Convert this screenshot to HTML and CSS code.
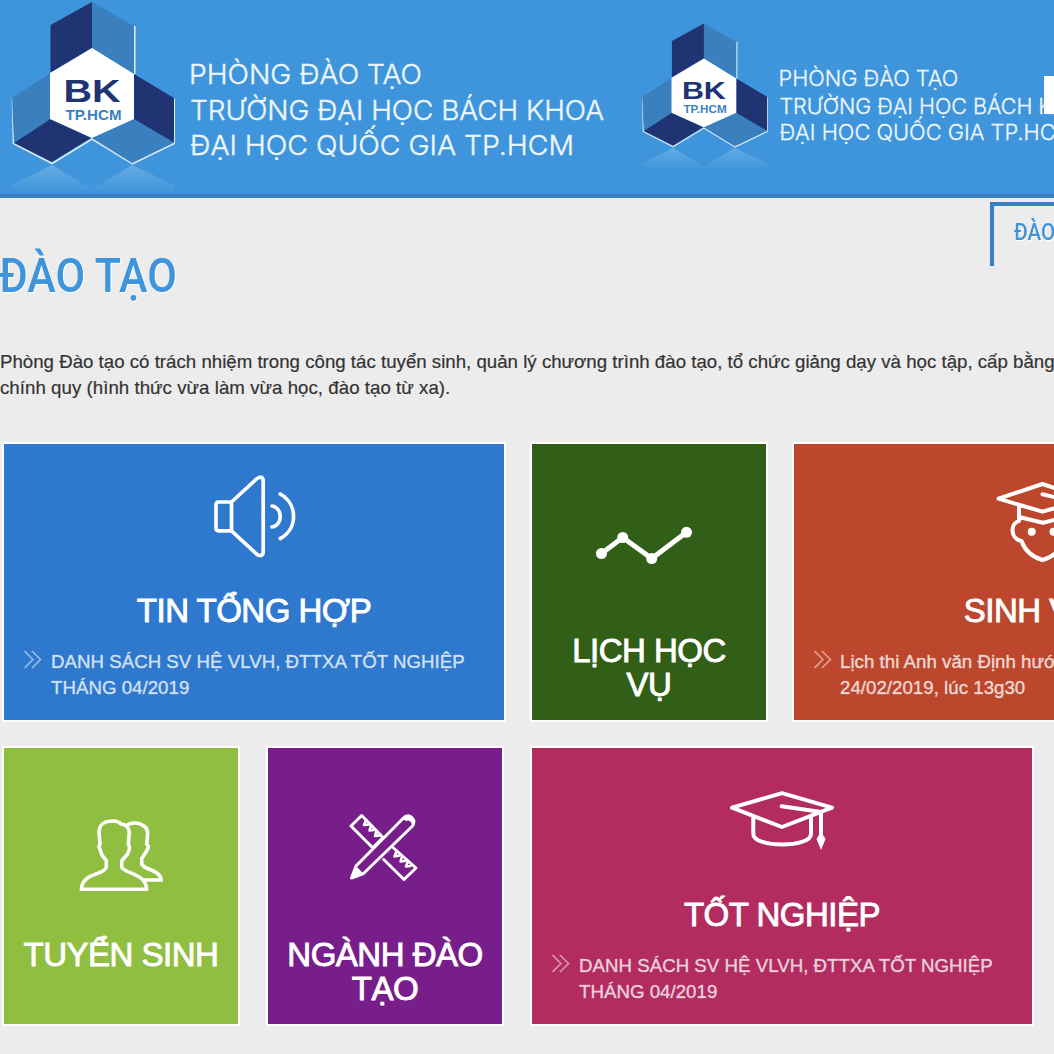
FILE: index.html
```html
<!DOCTYPE html>
<html lang="vi">
<head>
<meta charset="utf-8">
<title>Phòng Đào tạo</title>
<link rel="stylesheet" href="styles.css">
</head>
<body>
<svg class="defs" width="0" height="0" aria-hidden="true">
  <defs>
    <linearGradient id="fade" x1="0" y1="0" x2="0" y2="1"><stop offset="0" stop-color="#fff" stop-opacity=".2"/><stop offset="1" stop-color="#fff" stop-opacity="0.02"/></linearGradient>
    <symbol id="brand" viewBox="0 0 610 194" preserveAspectRatio="none">
      <g stroke-linejoin="round">
        <path d="M12.500 98.500 13.500 143.500 52 163.500 92 139 132.500 163.700 174.200 143.500V98.500M134.700 26V74" fill="none" stroke="#d9eaf8" stroke-width="1.700"/>
        <path d="M12 98 50.500 73V119L14 143ZM92 2 134 26V74L92 48ZM134 119 174 142.500 132 163 92 138Z" fill="#3a80bf"/>
        <path d="M92 2 50.500 25V73L92 48ZM134 74 174 98V142.500L134 119ZM50.500 119 91 138 52 162 14 143Z" fill="#203372"/>
        <path d="M92 48 134 74V119L92 138 50 119V73Z" fill="#fff"/>
      </g>
      <path d="M12 185 52 165 92 189 132 165 174 185V191H12Z" fill="url(#fade)"/>
      <g font-family="'Liberation Sans', sans-serif" font-weight="700">
        <text x="63.500" y="101.500" font-size="31" fill="#203372" textLength="57" lengthAdjust="spacingAndGlyphs">BK</text>
        <text x="65.500" y="119.500" font-size="15" fill="#3a80bf" textLength="56" lengthAdjust="spacingAndGlyphs">TP.HCM</text>
      </g>
      <g font-family="Inter, sans-serif" font-weight="300" font-size="27.500" fill="#eef6fd" stroke="#eef6fd" stroke-width=".4">
        <text x="189" y="84" textLength="233" lengthAdjust="spacingAndGlyphs">PHÒNG ĐÀO TẠO</text>
        <text x="190" y="120" textLength="414" lengthAdjust="spacingAndGlyphs">TRƯỜNG ĐẠI HỌC BÁCH KHOA</text>
        <text x="190" y="155" textLength="384" lengthAdjust="spacingAndGlyphs">ĐẠI HỌC QUỐC GIA TP.HCM</text>
      </g>
    </symbol>
    <symbol id="chevrons" viewBox="0 0 18 19"><path d="M.500 1 9 9.500.500 18M8 1 16.500 9.500 8 18" fill="none" stroke="#fff" stroke-opacity=".5" stroke-width="1.600"/></symbol>
  </defs>
</svg>

<header class="header">
  <svg class="brand"><use href="#brand"/></svg>
  <svg class="brand brand-small"><use href="#brand"/></svg>
  <div class="search"></div>
</header>

<main>
  <div class="top">
    <h1 class="page-title"><svg width="184" height="70"><text x="-1" y="54" textLength="178" lengthAdjust="spacingAndGlyphs">ĐÀO TẠO</text></svg></h1>
    <nav class="tab"><span>ĐÀO TẠO</span></nav>
  </div>
  <p class="intro"><span class="l1">Phòng Đào tạo có trách nhiệm trong công tác tuyển sinh, quản lý chương trình đào tạo, tổ chức giảng dạy và học tập, cấp bằng</span><br><span class="l2">chính quy (hình thức vừa làm vừa học, đào tạo từ xa).</span></p>

  <div class="row row-first">
    <section class="tile wide blue">
      <svg class="icon" viewBox="0 0 120 120"><path stroke-width="3.700" d="M37.500 46H24.800q-2.800 0-2.800 2.800V72q0 2.800 2.800 2.800H37.500ZM37.500 46 63 22.500Q69.200 19 69.200 25V95.500Q69.200 101.500 63 98.500L37.500 74.800M78 50C89 52 89 69 78 71M86.300 38C104 48 104 73 86.300 82.500"/></svg>
      <h2>TIN TỔNG HỢP</h2>
      <div class="news"><svg><use href="#chevrons"/></svg><p>DANH SÁCH SV HỆ VLVH, ĐTTXA TỐT NGHIỆP<br>THÁNG 04/2019</p></div>
    </section>
    <section class="tile small green">
      <svg class="icon" viewBox="0 0 120 120"><path stroke-width="5" d="M12.500 71.500 33.700 55.500 62.700 76.500 97.500 50.300"/><g class="solid"><circle cx="12.500" cy="71.500" r="5.500"/><circle cx="33.700" cy="55.500" r="5.500"/><circle cx="62.700" cy="76.500" r="5.500"/><circle cx="97.500" cy="50.300" r="5.500"/></g></svg>
      <h2>LỊCH HỌC<br>VỤ</h2>
    </section>
    <section class="tile wide orange">
      <svg class="icon" viewBox="0 0 120 120"><path d="M14.500 42.700 58.500 28 102.500 42.700 58.500 55.700ZM58.500 38.300 92 46V66M35 49.500V65C26 67 26 83 37.500 85C41 95 48 101 58.700 104C69 101 76 95 79.500 85C91 83 91 67 82 65V49.500M35 61 59 66.700 82 61"/><g class="solid"><circle cx="47.700" cy="75.700" r="4"/><circle cx="69.500" cy="75.700" r="4"/></g></svg>
      <h2>SINH VIÊN</h2>
      <div class="news"><svg><use href="#chevrons"/></svg><p class="student">Lịch thi Anh văn Định hướng<br>24/02/2019, lúc 13g30</p></div>
    </section>
  </div>

  <div class="row">
    <section class="tile small lime">
      <svg class="icon" viewBox="0 0 120 120"><path stroke-width="3.600" stroke-linecap="butt" stroke-linejoin="miter" d="M65 40C69 36 78 36 82 39.500Q87.500 42 86.500 50L85.700 58Q89 60 85 66L80.700 72.500V78C83 84 100 84 100 94H81M20.500 103.300C20.500 92 32 89 40 86Q45.500 83 45.300 81V74.500L41 69 38 60.500 39 58 38 47C38 38 43 35 52.500 35Q57 35 60 38Q67 38.500 68.300 46L67.300 58Q70 61 66.500 68L60.700 75V81C63 88 85.500 87 85.500 103.300Z"/></svg>
      <h2>TUYỂN SINH</h2>
    </section>
    <section class="tile small purple">
      <svg class="icon" viewBox="0 0 120 120"><path stroke-width="3" d="M58 51.500 47.700 61.700 26 40 36.700 29.500 58 51.500M68.500 62 91 82 79 93.500 58.700 73.500M31 80 79.500 31Q84 28 87 32T87.500 40L38.500 87.500 26.500 92Z"/><path stroke-width="2.500" d="M41 34 39 39 43.500 38.500M46 39 44.500 44.500 49 44M51.500 44.500 50 50 54.500 49.500M71.500 65 69.500 70.500 74.500 69.500M77 70 75.500 75.500 80 75M83 75 81 80.500 85.500 80"/><path class="solid" d="M26 92.500 30.500 79.500 34 83 38.500 88ZM77.500 32Q83 26 88 31T87.500 41Q87 35 83 34.500 79.500 36 77.500 32Z"/></svg>
      <h2>NGÀNH ĐÀO<br>TẠO</h2>
    </section>
    <section class="tile wide pink">
      <svg class="icon" viewBox="0 0 120 120"><path d="M10 47.700 60 33.200 110 47.700 60 67ZM59.700 46.300 99 52V76M31.300 57V74C31.300 88 89 88 89 74V57"/><path class="solid" d="M97 75H101L103.500 79 99 90 94.500 79Z"/></svg>
      <h2>TỐT NGHIỆP</h2>
      <div class="news"><svg><use href="#chevrons"/></svg><p>DANH SÁCH SV HỆ VLVH, ĐTTXA TỐT NGHIỆP<br>THÁNG 04/2019</p></div>
    </section>
  </div>
</main>
</body>
</html>
```

FILE: styles.css
```css
* { box-sizing: border-box; }
html { overflow: hidden; }
body {
  margin: 0;
  width: 1054px;
  height: 1054px;
  overflow: hidden;
  background: #ececec;
  color: #333;
  font-family: "Liberation Sans", Arial, sans-serif;
}
h1, h2, p { margin: 0; font-weight: 400; }
.defs { display: block; height: 0; }

.header {
  display: flex;
  height: 198px;
  overflow: hidden;
  background: #3f95db;
  border-bottom: 4px solid #3a80bf;
}
.brand { flex: none; width: 610px; height: 194px; }
.brand-small { width: 470px; height: 148px; margin: 21.500px -59px 0 23px; }
.search { flex: none; width: 40px; height: 38px; margin-top: 76px; background: #fff; z-index: 1; }

.top { display: flex; justify-content: space-between; height: 151px; padding-top: 4px; }
.page-title { padding-top: 36px; }
.page-title svg {
  display: block;
  overflow: visible;
  font: 500 49px Roboto, sans-serif;
  fill: #3f95db;
  filter: drop-shadow(1px 1px 0 #fff);
}
.tab {
  width: 64px;
  height: 64px;
  padding: 12px 0 0 20px;
  border-top: 4px solid #3a80bf;
  border-left: 4px solid #3a80bf;
  overflow: hidden;
  color: #3f95db;
  font: 500 24px/28px Roboto, sans-serif;
  text-shadow: 1px 1px 0 #fff;
  white-space: nowrap;
}
.tab span { display: inline-block; transform: scaleX(.86); transform-origin: 0 0; }

.intro {
  height: 93px;
  font-size: 18.670px;
  line-height: 26px;
  white-space: nowrap;
  -webkit-text-stroke: .2px #333;
}
.l1 { letter-spacing: .008px; }
.l2 { letter-spacing: .04px; }

.row { display: flex; gap: 26px; padding-left: 2px; margin-bottom: 24px; }
.row-first { gap: 24px; }
.tile {
  display: flex;
  flex: none;
  flex-direction: column;
  align-items: center;
  height: 280px;
  border: 2px solid #fff;
  color: #fff;
}
.wide { width: 504px; }
.small { width: 238px; }
.blue { background: #2e79ce; }
.green { background: #325f17; }
.orange { background: #bc472d; }
.lime { background: #8fbe41; }
.purple { background: #771e8b; }
.pink { background: #b22c60; }

.icon {
  flex: none;
  width: 120px;
  height: 120px;
  margin: 12px 0 18px;
  fill: none;
  stroke: #fff;
  stroke-width: 4;
  stroke-linecap: round;
  stroke-linejoin: round;
}
.small .icon { margin: 38px 0 32px; }
.icon .solid { fill: #fff; stroke: none; }
.tile h2 {
  font-size: 33px;
  letter-spacing: -.5px;
  line-height: 34px;
  text-align: center;
  white-space: nowrap;
  -webkit-text-stroke: .9px #fff;
}
.news { display: flex; gap: 9px; align-self: stretch; padding-left: 20px; margin-top: 20px; }
.news svg { flex: none; width: 18px; height: 19px; margin-top: 2px; }
.news p {
  padding-top: 1px;
  color: rgba(255, 255, 255, .75);
  font-size: 18.670px;
  letter-spacing: .03px;
  line-height: 26px;
  white-space: nowrap;
  -webkit-text-stroke: .6px rgba(255, 255, 255, .45);
}
.orange { overflow: hidden; }
.orange .news { gap: 8px; }
```
